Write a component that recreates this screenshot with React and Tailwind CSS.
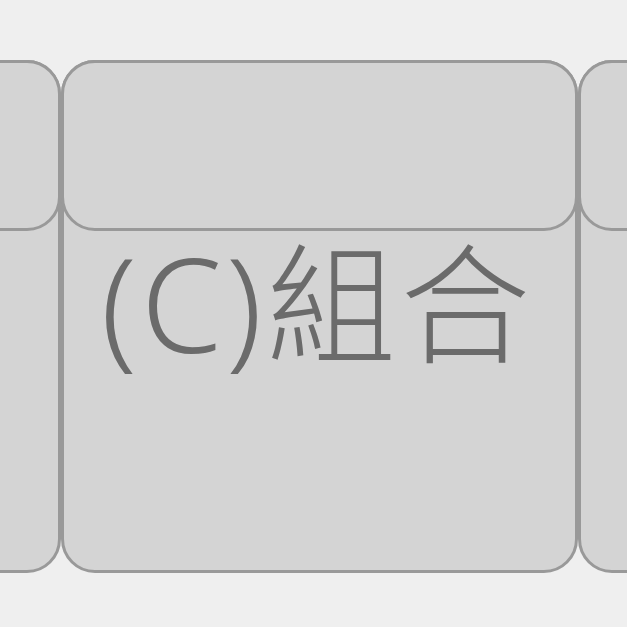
export default function App() {
  const Module = ({ children }) => (
    <div className="flex h-[513px] w-[517px] shrink-0 flex-col rounded-[34px] border-[3px] border-[#999999] bg-[#d4d4d4]">
      <div className="-mx-[3px] -mt-[3px] h-[171px] shrink-0 rounded-[34px] border-[3px] border-[#999999] bg-[#d4d4d4]" />
      {children}
    </div>
  );
  return (
    <div
      className="h-[627px] w-[627px] overflow-hidden bg-[#efefef] pt-[60px]"
      style={{ fontFamily: '"Noto Sans", "Noto Sans CJK TC", sans-serif' }}
    >
      <div className="-ml-[456px] flex">
        <Module />
        <Module>
          <div className="mt-[7px] flex justify-center pr-[4px] text-[130px] font-light leading-[130px] tracking-[4px] text-[#6b6b6b]">
            (C)組合
          </div>
        </Module>
        <Module />
      </div>
    </div>
  );
}
